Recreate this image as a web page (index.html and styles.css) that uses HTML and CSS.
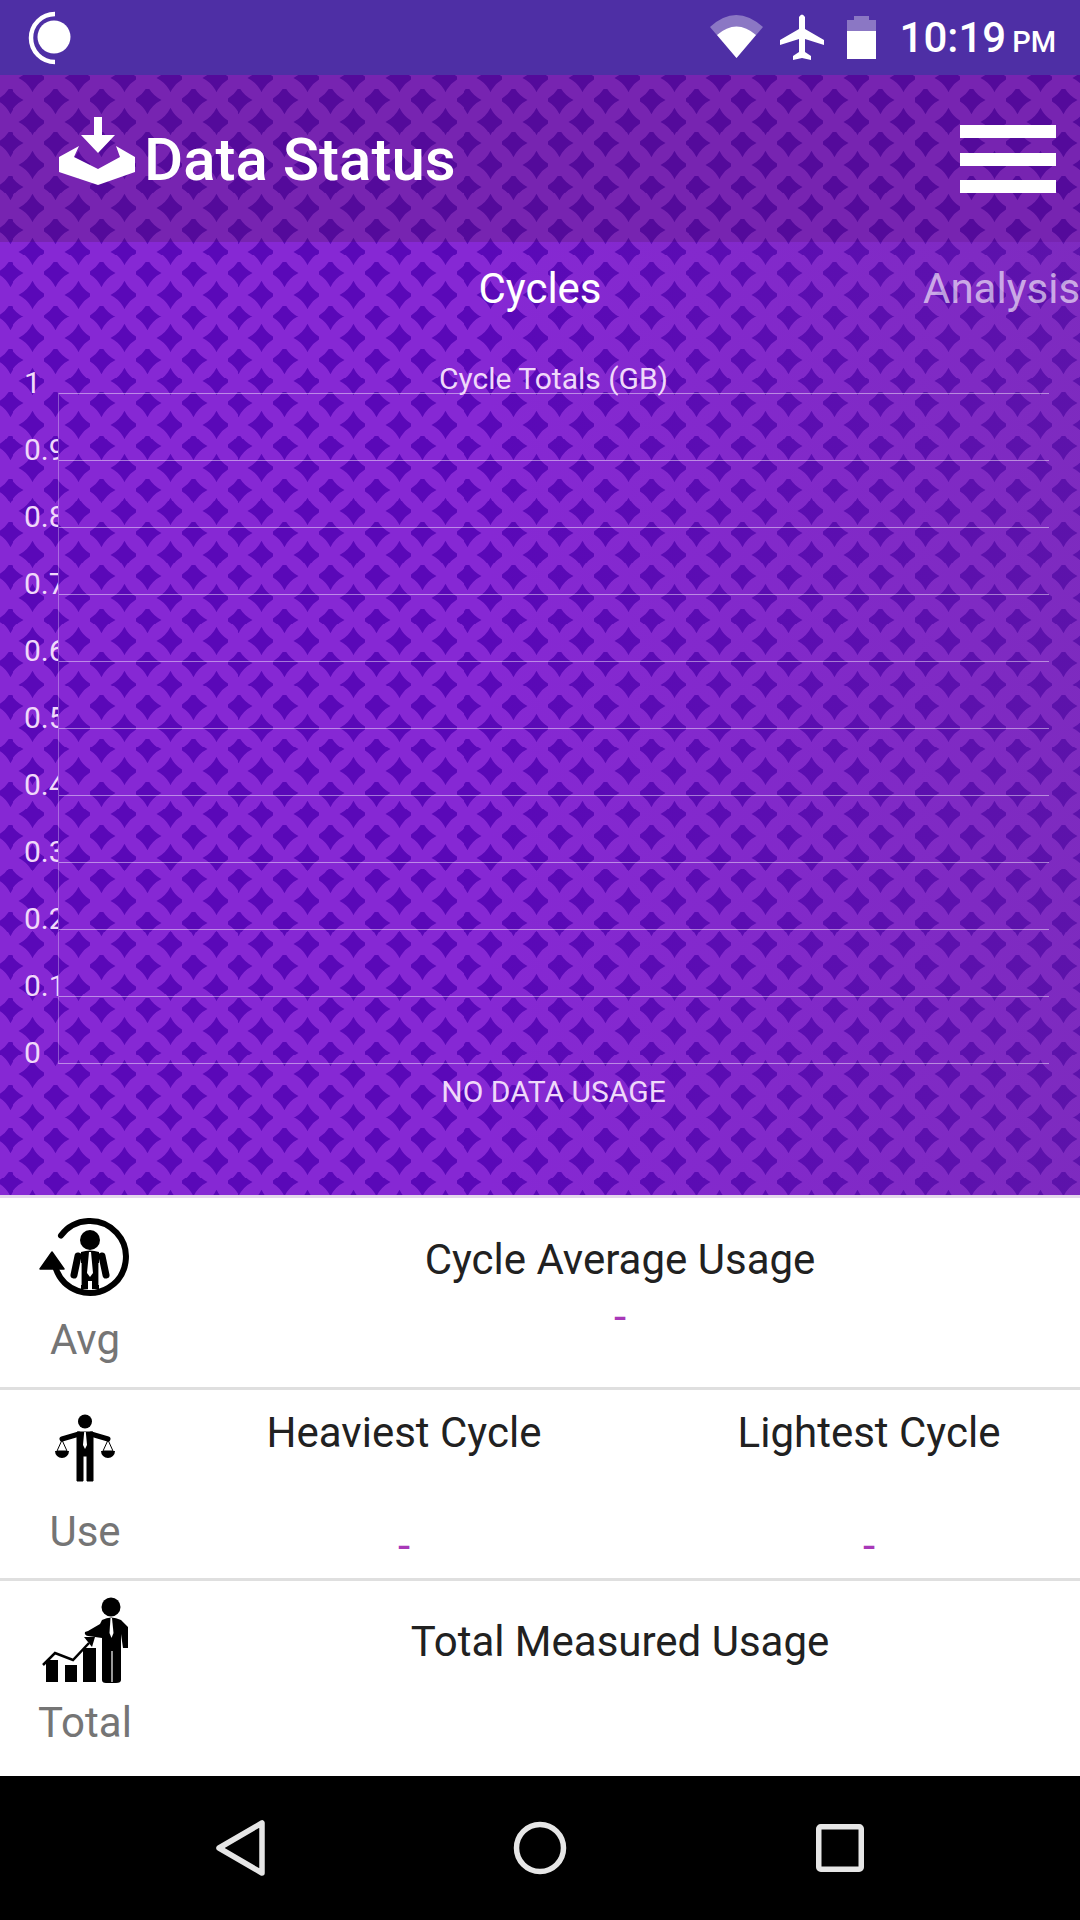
FILE: index.html
```html
<!DOCTYPE html>
<html lang="en">
<head>
    <meta charset="UTF-8">
    <meta name="viewport" content="width=device-width, initial-scale=1.0">
    <title>Data Status</title>
    <link rel="stylesheet" href="styles.css">
</head>
<body>
    <div class="status-bar">
        <svg class="moon" width="44" height="54" viewBox="0 0 44 54">
            <path d="M27 3A24 24 0 0 0 27 51" fill="none" stroke="#fff" stroke-width="4.5"/>
            <circle cx="26" cy="26" r="16.5" fill="#fff"/>
        </svg>
        <div class="status-right">
            <svg width="53" height="43" viewBox="0 0 53 43">
                <path d="M0 12Q26 -12 53 12L26.500 43Z" fill="#fff" opacity="0.35"/>
                <path d="M7 20Q26.500 3 46 20L26.500 43Z" fill="#fff"/>
            </svg>
            <svg width="44" height="46" viewBox="0 0 44 46">
                <path d="M19 3Q22 -2 25 3V15L44 26V31L25 25V38L31 42V46L22 44L13 46V42L19 38V25L0 31V26L19 15Z" fill="#fff"/>
            </svg>
            <svg width="29" height="43" viewBox="0 0 29 43">
                <path d="M7 0H22V4H29V15H0V4H7Z" fill="#fff" opacity="0.35"/>
                <rect x="0" y="15" width="29" height="28" fill="#fff"/>
            </svg>
            <div class="clock">10:19<span class="ampm">PM</span></div>
        </div>
    </div>

    <div class="patterned">
        <header class="app-header">
            <div class="app-title">
                <svg width="76" height="68" viewBox="0 0 76 68">
                    <!-- Tray with the arrow dropping in -->
                    <path d="M35 0H43V18H56L39 36L22 18H35Z" fill="#fff"/>
                    <path d="M20 29L0 40V55L39 68L76 55V40L57 29L61 40L39 52L15 40Z" fill="#fff"/>
                </svg>
                <span>Data Status</span>
            </div>
            <div class="menu-icon">
                <span></span><span></span><span></span>
            </div>
        </header>

        <section class="chart-panel">
            <div class="tabs">
                <div class="tab tab-active">Cycles</div>
                <div class="tab tab-next">Analysis</div>
            </div>
            <div class="chart">
                <div class="axis">
                    <div>1</div><div>0.9</div><div>0.8</div><div>0.7</div><div>0.6</div><div>0.5</div>
                    <div>0.4</div><div>0.3</div><div>0.2</div><div>0.1</div><div>0</div>
                </div>
                <div class="plot-wrap">
                    <div class="chart-title">Cycle Totals (GB)</div>
                    <div class="plot">
                        <div></div><div></div><div></div><div></div><div></div>
                        <div></div><div></div><div></div><div></div><div></div>
                    </div>
                    <div class="chart-caption">NO DATA USAGE</div>
                </div>
            </div>
        </section>
    </div>

    <main class="stats">
        <div class="stat-row row-avg">
            <div class="side">
                <div class="side-icon">
                    <svg class="icon-avg" width="100" height="84" viewBox="0 0 100 84">
                        <path d="M24 20.500A36 36 0 1 1 19 54" fill="none" stroke="#000" stroke-width="6" stroke-linecap="round"/>
                        <path d="M15 37L3 54H27Z" fill="#000" stroke="#000" stroke-width="1.500" stroke-linejoin="round"/>
                        <circle cx="53" cy="25" r="10"/>
                        <path d="M44 37Q53 34 62 37V74H44Z" fill="#000"/>
                        <path d="M41 41L37 60M65 41L69 60" stroke="#000" stroke-width="7" stroke-linecap="round"/>
                        <path d="M52 37H54L56 58L53 62L50 58Z" fill="#fff"/>
                        <rect x="51" y="66" width="4" height="9" fill="#fff"/>
                        <path d="M44 48V70M62 48V70" stroke="#fff" stroke-width="1.200"/>
                    </svg>
                </div>
                <div class="side-label">Avg</div>
            </div>
            <div class="stat-cols">
                <div class="stat">
                    <div class="stat-name">Cycle Average Usage</div>
                    <div class="stat-value">-</div>
                </div>
            </div>
        </div>

        <div class="stat-row row-use">
            <div class="side">
                <div class="side-icon">
                    <svg width="64" height="70" viewBox="0 0 64 70">
                        <circle cx="32" cy="7.500" r="7"/>
                        <path d="M24 18H40V67H34V42H30V67H24Z" fill="#000" stroke="#000" stroke-width="1" stroke-linejoin="round"/>
                        <path d="M26 20L9 25M38 20L55 25" stroke="#000" stroke-width="5" stroke-linecap="round"/>
                        <path d="M31.200 18H32.800L34 31L32 35L30 31Z" fill="#fff"/>
                        <path d="M9 26L4 37H14ZM55 26L50 37H60Z" fill="none" stroke="#000" stroke-width="1"/>
                        <path d="M2 37H16A7 7 0 0 1 2 37ZM48 37H62A7 7 0 0 1 48 37Z" fill="#000"/>
                    </svg>
                </div>
                <div class="side-label">Use</div>
            </div>
            <div class="stat-cols">
                <div class="stat stat-left">
                    <div class="stat-name">Heaviest Cycle</div>
                    <div class="stat-value">-</div>
                </div>
                <div class="stat stat-right">
                    <div class="stat-name">Lightest Cycle</div>
                    <div class="stat-value">-</div>
                </div>
            </div>
        </div>

        <div class="stat-row row-total">
            <div class="side">
                <div class="side-icon">
                    <svg class="icon-total" width="90" height="88" viewBox="0 0 90 88">
                        <circle cx="69" cy="11" r="9.500"/>
                        <path d="M60 24Q69 19 79 24L86 31V52H81L79 38V84Q79 87 74 87H64Q60 87 60 84V42L46 40Q42 39 43 36L46 35L58 28Z" fill="#000"/>
                        <path d="M68.500 22H70L71.500 37L69.500 42L67.500 37Z" fill="#fff"/>
                        <path d="M70 55V86" stroke="#fff" stroke-width="1.200"/>
                        <rect x="4" y="64" width="12" height="22"/>
                        <rect x="23" y="69" width="12" height="17"/>
                        <rect x="41" y="52" width="13" height="34"/>
                        <path d="M1 69L13 57L31 64L47 47" fill="none" stroke="#000" stroke-width="2.500"/>
                        <path d="M42 41H53L50 51Z" fill="#000"/>
                    </svg>
                </div>
                <div class="side-label">Total</div>
            </div>
            <div class="stat-cols">
                <div class="stat">
                    <div class="stat-name">Total Measured Usage</div>
                </div>
            </div>
        </div>
    </main>

    <nav class="nav-bar">
        <svg width="54" height="62" viewBox="0 0 54 62">
            <path d="M49 6V56L6 31Z" fill="none" stroke="#e6e6e6" stroke-width="5.500" stroke-linejoin="round"/>
        </svg>
        <svg width="54" height="54" viewBox="0 0 54 54">
            <circle cx="27" cy="27" r="23.500" fill="none" stroke="#e6e6e6" stroke-width="5.500"/>
        </svg>
        <svg width="48" height="48" viewBox="0 0 48 48">
            <rect x="2.750" y="2.750" width="42.500" height="42.500" rx="2" fill="none" stroke="#e6e6e6" stroke-width="5.500"/>
        </svg>
    </nav>
</body>
</html>
```

FILE: styles.css
```css
* {
    box-sizing: border-box;
}

body {
    width: 1080px;
    height: 1920px;
    margin: 0;
    overflow: hidden;
    font-family: Roboto, "Liberation Sans", sans-serif;
    background: #000;
    color: #212121;
}

/* Status bar */
.status-bar {
    height: 75px;
    padding: 0 24px 0 28px;
    display: flex;
    align-items: center;
    justify-content: space-between;
    background: #4e2fa5;
}

.moon {
    margin-top: 1px;
}

.status-right {
    display: flex;
    align-items: center;
    color: #fff;
}

.status-right svg:nth-child(1) {
    margin-top: -2px;
}

.status-right svg:nth-child(2) {
    margin-left: 17px;
    margin-top: -2px;
}

.status-right svg:nth-child(3) {
    margin-left: 23px;
    margin-top: -1px;
}

.clock {
    margin-left: 24px;
    padding-top: 5px;
    font-size: 42px;
    font-weight: 500;
    line-height: 75px;
}

.ampm {
    margin-left: 6px;
    font-size: 29px;
}

/* Patterned purple area */
.patterned {
    height: 1120px;
    background-color: #8628d4;
    background-image: url("data:image/svg+xml,%3Csvg xmlns='http://www.w3.org/2000/svg' width='45.8' height='43.3' viewBox='0 0 45.8 43.3'%3E%3Cpath fill='%235a08b8' d='M11.45 -3.2Q16 6.200 25.450 10.800Q16 15.400 11.45 24.800Q6.900 15.400 -2.550 10.800Q6.900 6.200 11.45 -3.200Z'/%3E%3Cpath fill='%235a08b8' d='M34.350 18.450Q38.900 27.850 48.350 32.450Q38.900 37.050 34.350 46.450Q29.800 37.050 20.350 32.450Q29.800 27.850 34.350 18.450Z'/%3E%3Cpath fill='%235a08b8' d='M34.350 -24.850Q38.900 -15.450 48.350 -10.850Q38.900 -6.250 34.350 3.150Q29.800 -6.250 20.350 -10.850Q29.800 -15.450 34.350 -24.850Z'/%3E%3C/svg%3E");
    background-size: 45.8px 43.3px;
    background-position: -1.45px 14.2px;
}

.app-header {
    height: 167px;
    padding: 42px 24px 0 59px;
    display: flex;
    justify-content: space-between;
    align-items: flex-start;
    background: rgba(60, 20, 40, 0.2);
}

.app-title {
    display: flex;
    color: #fff;
    font-size: 60px;
    font-weight: 500;
    line-height: 68px;
}

.app-title span {
    margin: 9px 0 0 9px;
}

.menu-icon {
    width: 96px;
    margin-top: 8px;
    display: flex;
    flex-direction: column;
    gap: 14.500px;
}

.menu-icon span {
    height: 13px;
    background: #fff;
}

.chart-panel {
    height: 953px;
    background: linear-gradient(to right, transparent 45%, rgba(100, 50, 130, 0.25) 100%);
}

/* Tabs */
.tabs {
    height: 92px;
    display: grid;
    grid-template-columns: 360px 360px 360px;
    overflow: hidden;
    font-size: 42px;
    line-height: 94px;
    white-space: nowrap;
}

.tab-active {
    grid-column: 2;
    text-align: center;
    color: #fff;
}

.tab-next {
    grid-column: 3;
    padding-left: 203px;
    color: rgba(255, 255, 255, 0.62);
}

/* Chart */
.chart {
    margin-top: 15px;
    display: flex;
    color: #f0d8fa;
    font-size: 30px;
}

.axis {
    width: 58px;
    padding-left: 24px;
    overflow: hidden;
}

.axis div {
    height: 67px;
    line-height: 67px;
}

.plot-wrap {
    width: 991px;
}

.chart-title {
    margin-top: 16px;
    text-align: center;
    line-height: 28px;
}

.plot {
    border-left: 1px solid rgba(255, 255, 255, 0.3);
    border-bottom: 1px solid rgba(255, 255, 255, 0.45);
}

.plot div {
    height: 67px;
    border-top: 1px solid rgba(255, 255, 255, 0.45);
}

.chart-caption {
    margin-top: 14px;
    text-align: center;
    line-height: 28px;
}

/* Stat rows */
.stats {
    height: 581px;
    background: #fff;
    border-top: 3px solid #e4d5ec;
}

.stat-row {
    display: flex;
    border-bottom: 3px solid #dfdfdf;
}

.row-avg {
    height: 192px;
}

.row-use {
    height: 191px;
}

.row-total {
    height: 195px;
    border-bottom: none;
}

.side {
    width: 170px;
    flex-shrink: 0;
    text-align: center;
}

.side-icon {
    height: 117px;
    display: flex;
    align-items: center;
    justify-content: center;
}

.icon-avg {
    margin-left: 3px;
}

.icon-total {
    margin-left: 4px;
}

.side-label {
    padding-top: 1px;
    font-size: 42px;
    line-height: 48px;
    color: #757575;
}

.stat-cols {
    flex: 1;
    display: flex;
    padding-right: 10px;
}

.stat {
    flex: 1;
    text-align: center;
}

.stat-name {
    font-size: 42px;
    line-height: 48px;
}

.stat-value {
    font-size: 44px;
    line-height: 48px;
    color: #a838b8;
}

.row-avg .stat {
    padding-top: 38px;
}

.row-avg .stat-value {
    margin-top: 9px;
}

.row-use .stat-cols {
    padding-right: 0;
}

.row-use .stat {
    padding-top: 19px;
}

.row-use .stat-value {
    margin-top: 65px;
}

.stat-left {
    flex: 0 0 468px;
}

.stat-right {
    padding-left: 20px;
}

.row-total .stat {
    padding-top: 37px;
}

/* Navigation bar */
.nav-bar {
    height: 144px;
    padding: 0 90px;
    display: grid;
    grid-template-columns: repeat(3, 300px);
    align-items: center;
    justify-items: center;
    background: #000;
}
```
